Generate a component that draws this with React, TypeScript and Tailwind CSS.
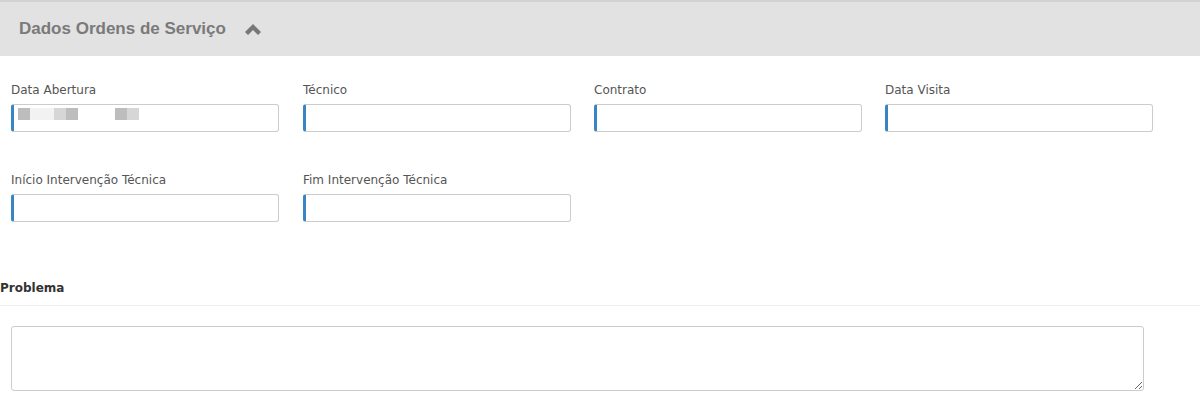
import React from "react";

const Field = ({ label, children }: { label: string; children?: React.ReactNode }) => (
  <div className="flex flex-col">
    <label className="text-[12px] leading-[14px] text-[#555] mb-[7px]">{label}</label>
    <div className="relative h-[28px] w-[268px] rounded-[3px] border border-[#ccc] border-l-[3px] border-l-[#3a84c2] bg-white">
      {children}
    </div>
  </div>
);

const Blur = () => (
  <div className="absolute left-[4px] top-[3px] flex h-[12px]">
    <div className="w-[12px] bg-[#bdbdbd]" />
    <div className="w-[24px] bg-[#f2f2f2]" />
    <div className="w-[12px] bg-[#d6d6d6]" />
    <div className="w-[12px] bg-[#bdbdbd]" />
    <div className="w-[37px]" />
    <div className="w-[12px] bg-[#bdbdbd]" />
    <div className="w-[12px] bg-[#d6d6d6]" />
  </div>
);

export default function App() {
  return (
    <div className="w-[1200px] h-[396px] bg-white overflow-hidden" style={{ fontFamily: '"DejaVu Sans", sans-serif' }}>
      <div className="h-[56px] bg-[#e2e2e2] border-t-2 border-[#d2d2d2] flex items-center pl-[19px]">
        <span className="text-[17px] font-bold text-[#7a7a7a]" style={{ fontFamily: '"Liberation Sans", sans-serif' }}>
          Dados Ordens de Serviço
        </span>
        <svg className="ml-[18px]" width="18" height="13" viewBox="0 0 18 13">
          <path d="M9 1 L17 9 L14 12 L9 7 L4 12 L1 9 Z" fill="#777" />
        </svg>
      </div>
      <div className="px-[11px] pt-[27px]">
        <div className="grid grid-cols-[292px_291px_291px_291px] gap-y-[41px]">
          <Field label="Data Abertura">
            <Blur />
          </Field>
          <Field label="Técnico" />
          <Field label="Contrato" />
          <Field label="Data Visita" />
          <Field label="Início Intervenção Técnica" />
          <Field label="Fim Intervenção Técnica" />
        </div>
      </div>
      <div className="mt-[53px] border-b border-[#eee] pb-[6px]">
        <span className="text-[12px] font-bold text-[#333]">Problema</span>
      </div>
      <div className="px-[11px] pt-[20px]">
        <textarea className="block w-[1133px] h-[65px] rounded-[3px] border border-[#ccc] bg-white resize-y" />
      </div>
    </div>
  );
}
